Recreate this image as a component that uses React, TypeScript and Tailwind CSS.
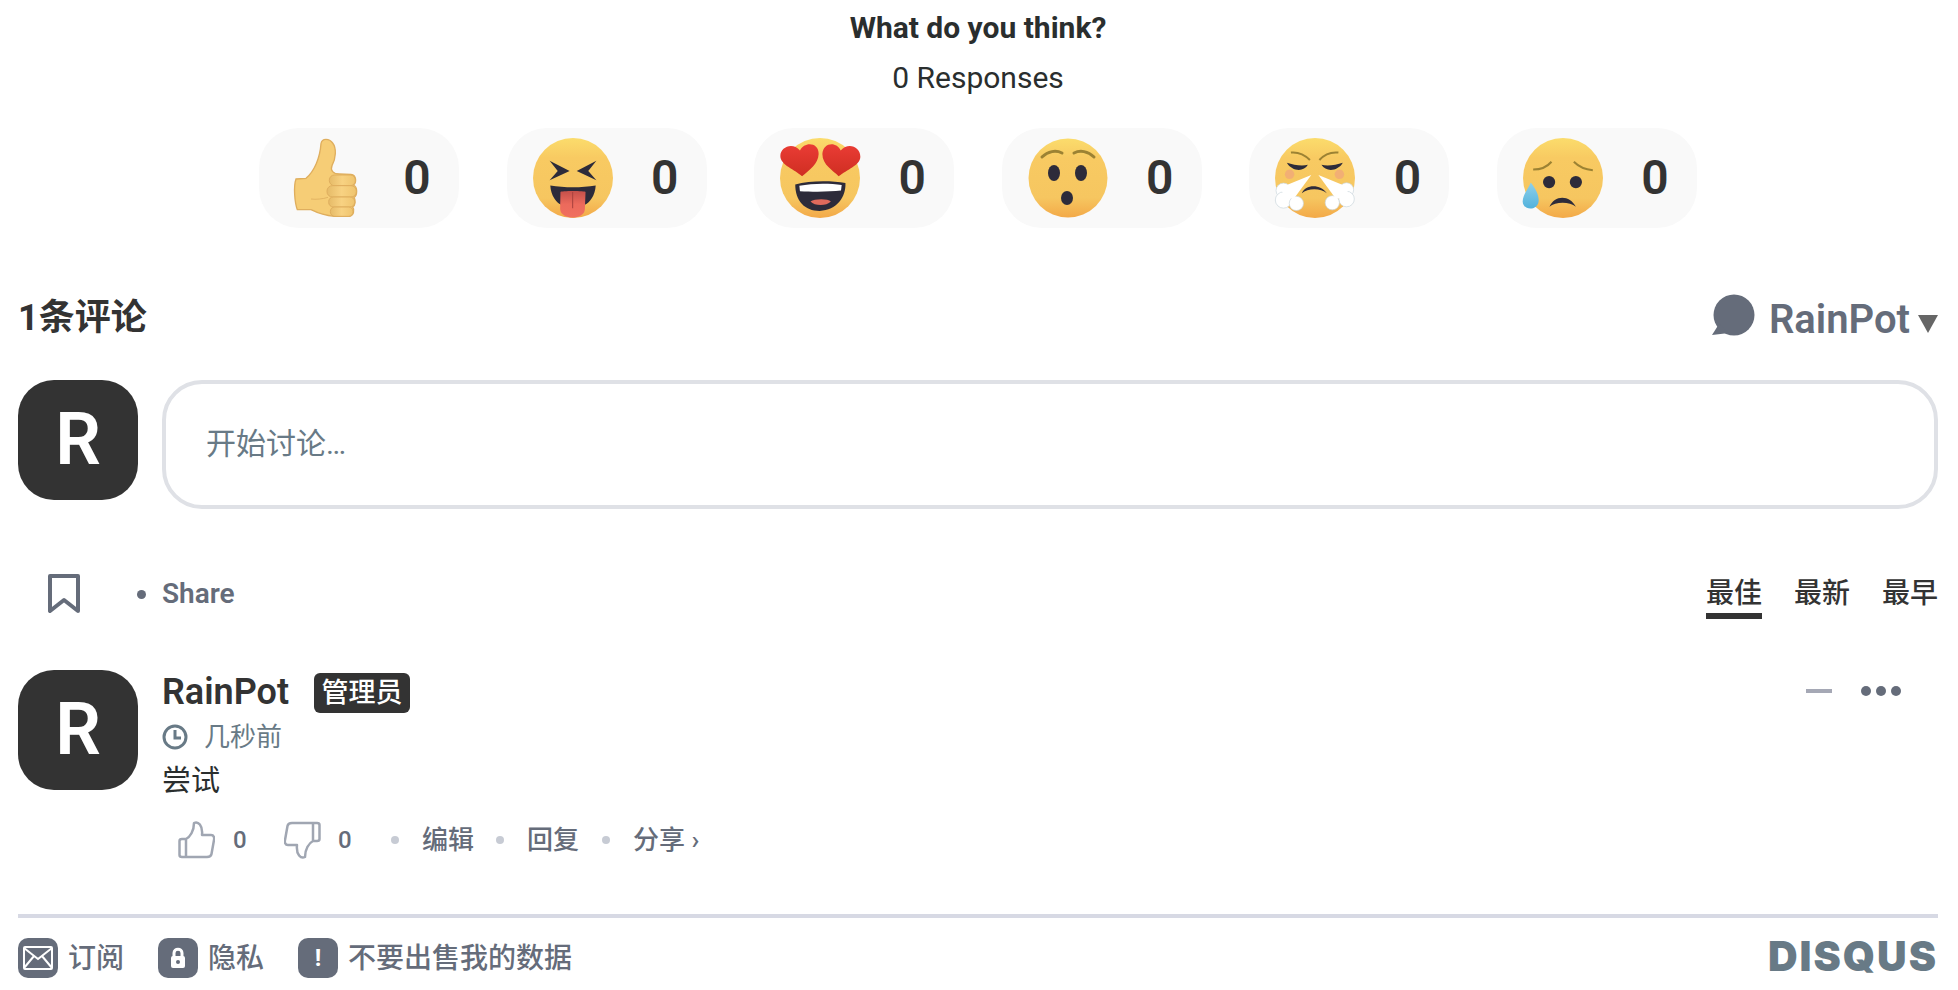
import React from "react";

const cjk = "font-['Roboto','Noto_Sans_CJK_SC',sans-serif]";

function Defs({ id }: { id: string }) {
  return (
    <defs>
      <linearGradient id={id} x1="0" y1="0" x2="0" y2="1">
        <stop offset="0" stopColor="#fbdc6c" />
        <stop offset="0.25" stopColor="#f8ca62" />
        <stop offset="0.75" stopColor="#f6c660" />
        <stop offset="1" stopColor="#f3a948" />
      </linearGradient>
      <linearGradient id={id + "t"} x1="0" y1="0" x2="0" y2="1">
        <stop offset="0" stopColor="#c4504a" />
        <stop offset="0.5" stopColor="#ec6a5c" />
        <stop offset="1" stopColor="#f0705f" />
      </linearGradient>
      <linearGradient id={id + "h"} x1="0" y1="0" x2="0" y2="1">
        <stop offset="0" stopColor="#ea3c35" />
        <stop offset="1" stopColor="#cf2e22" />
      </linearGradient>
      <linearGradient id={id + "d"} x1="0" y1="0" x2="0" y2="1">
        <stop offset="0" stopColor="#8fd0ea" />
        <stop offset="1" stopColor="#52b2dc" />
      </linearGradient>
      <linearGradient id={id + "f"} x1="0" y1="0" x2="1" y2="0">
        <stop offset="0" stopColor="#e6bb68" />
        <stop offset="0.5" stopColor="#f8d282" />
        <stop offset="1" stopColor="#efc46e" />
      </linearGradient>
    </defs>
  );
}

function Thumb() {
  return (
    <svg width="80" height="80" viewBox="17 25 240 240" className="shrink-0">
      <Defs id="a" />
      <path
        d="M125 42C128 24 150 26 160 40C172 56 170 85 158 108C152 122 162 133 180 133L215 134C232 136 232 160 222 166C236 172 234 198 224 203C230 210 228 228 220 232C226 240 224 258 210 260L165 260C140 258 115 250 95 240L54 240C46 220 42 170 50 148L80 146C105 125 122 85 125 42Z"
        fill="#f6cd76"
        stroke="#dfae5e"
        strokeWidth="4"
      />
      <path d="M95 208C110 210 130 208 146 203" fill="none" stroke="#dfae5e" strokeWidth="2.5" />
      <rect x="150" y="136" width="78" height="32" rx="15" fill="url(#af)" stroke="#dfae5e" strokeWidth="3" />
      <rect x="143" y="168" width="88" height="34" rx="16" fill="url(#af)" stroke="#dfae5e" strokeWidth="3" />
      <rect x="148" y="202" width="78" height="30" rx="14" fill="url(#af)" stroke="#dfae5e" strokeWidth="3" />
      <rect x="153" y="232" width="68" height="28" rx="13" fill="url(#af)" stroke="#dfae5e" strokeWidth="3" />
    </svg>
  );
}

function Tongue() {
  return (
    <svg width="80" height="80" viewBox="17 25 236 236" className="shrink-0">
      <Defs id="b" />
      <circle cx="135" cy="143" r="118" fill="url(#b)" />
      <path d="M66 92L125 122L66 150L90 122Z" fill="#2d2b3a" />
      <path d="M204 92L146 122L204 150L180 122Z" fill="#2d2b3a" />
      <path d="M68 165C110 172 160 172 202 165C200 195 185 215 170 222L100 222C85 215 70 195 68 165Z" fill="#2d2b3a" />
      <path d="M98 184C98 180 172 180 172 184L170 235C168 268 100 268 97 235Z" fill="url(#bt)" />
      <path d="M134 184V232" stroke="#a8423e" strokeWidth="3" />
    </svg>
  );
}

function Hearts() {
  return (
    <svg width="80" height="80" viewBox="13 25 236 236" className="shrink-0 overflow-visible">
      <Defs id="c" />
      <circle cx="131" cy="143" r="118" fill="url(#c)" />
      <path d="M58 162C100 150 165 150 206 158C208 200 180 238 130 240C85 240 58 210 58 162Z" fill="#2d2b3a" />
      <path d="M70 166C110 158 160 158 195 164L193 180C160 184 110 184 72 182Z" fill="#ffffff" />
      <path d="M103 212C115 204 155 204 163 212C150 226 115 226 103 212Z" fill="#e06a5c" />
      <path d="M78 138C58 118 14 105 14 78C14 52 50 36 72 62C85 34 128 38 127 72C126 102 100 118 78 138Z" fill="url(#ch)" />
      <path d="M186 138C170 120 138 105 138 72C140 38 180 34 192 62C215 36 250 52 250 80C250 105 210 118 186 138Z" fill="url(#ch)" />
    </svg>
  );
}

function Surprise() {
  return (
    <svg width="80" height="80" viewBox="0 0 80 80" className="shrink-0">
      <Defs id="d" />
      <circle cx="40" cy="40" r="39.5" fill="url(#d)" />
      <path d="M14 19C20 13 28 12 34 15" fill="none" stroke="#9c8233" strokeWidth="3" strokeLinecap="round" />
      <path d="M46 15C52 12 60 13 66 19" fill="none" stroke="#9c8233" strokeWidth="3" strokeLinecap="round" />
      <ellipse cx="26" cy="35" rx="6" ry="8" fill="#2d2b3a" />
      <ellipse cx="53" cy="35" rx="6" ry="8" fill="#2d2b3a" />
      <ellipse cx="39" cy="60" rx="6" ry="7" fill="#2d2b3a" />
    </svg>
  );
}

function Steam() {
  const cloud = (cx: number, cy: number, r: number) => (
    <circle cx={cx} cy={cy} r={r} fill="#ffffff" stroke="#c9d6dc" strokeWidth="2" />
  );
  return (
    <svg width="80" height="80" viewBox="15 25 236 236" className="shrink-0 overflow-visible">
      <Defs id="e" />
      <circle cx="133" cy="143" r="118" fill="url(#e)" />
      <path d="M62 68C82 66 102 74 118 90" fill="none" stroke="#9c8233" strokeWidth="6" />
      <path d="M146 90C160 74 182 66 202 68" fill="none" stroke="#9c8233" strokeWidth="6" />
      <path d="M50 98C70 105 95 108 112 104C100 126 65 124 50 98Z" fill="#2d2b3a" />
      <path d="M152 104C170 108 195 105 215 98C200 124 165 126 152 104Z" fill="#2d2b3a" />
      <circle cx="58" cy="132" r="14" fill="#ee9f80" opacity="0.6" />
      <circle cx="205" cy="132" r="14" fill="#ee9f80" opacity="0.6" />
      <path d="M94 188C105 160 150 160 168 188C150 172 112 172 94 188Z" fill="#2d2b3a" />
      {cloud(40, 180, 22)}
      {cloud(40, 208, 24)}
      {cloud(78, 218, 21)}
      {cloud(226, 178, 21)}
      {cloud(226, 205, 23)}
      {cloud(184, 216, 21)}
      <path d="M122 134L30 172L45 200L70 205Z" fill="#ffffff" />
      <path d="M143 134L235 172L220 200L195 205Z" fill="#ffffff" />
    </svg>
  );
}

function Sad() {
  return (
    <svg width="80" height="80" viewBox="12 25 236 236" className="shrink-0 overflow-visible">
      <Defs id="g" />
      <circle cx="130" cy="143" r="118" fill="url(#g)" />
      <path d="M42 118C65 118 85 108 96 95" fill="none" stroke="#9c8233" strokeWidth="6" />
      <path d="M162 95C175 108 195 118 218 120" fill="none" stroke="#9c8233" strokeWidth="6" />
      <circle cx="89" cy="155" r="18" fill="#2d2b3a" />
      <circle cx="168" cy="155" r="18" fill="#2d2b3a" />
      <path d="M90 228C105 192 150 192 168 228C150 212 108 212 90 228Z" fill="#2d2b3a" />
      <path d="M35 156C50 175 60 195 58 212C55 240 12 240 11 212C12 190 28 175 35 156Z" fill="url(#gd)" />
    </svg>
  );
}

function Pill({ children }: { children: React.ReactNode }) {
  return (
    <div className="w-[200px] h-[100px] rounded-[40px] bg-[#f9f9f9] flex items-center pl-[26px]">
      {children}
      <span className="ml-[38px] w-[28px] text-center text-[48px] leading-none font-semibold text-[#333333]">0</span>
    </div>
  );
}

function Avatar() {
  return (
    <div className="w-[120px] h-[120px] shrink-0 rounded-[36px] bg-[#333333] flex items-center justify-center text-white text-[72px] leading-none font-semibold">
      R
    </div>
  );
}

function LikeIcon({ down }: { down?: boolean }) {
  return (
    <svg width="37" height="38" viewBox="0 0 37 38" className={down ? "rotate-180" : ""} fill="none" stroke="#a0a6b2" strokeWidth="2.5" strokeLinejoin="round">
      <path d="M8 18C12 16 16 10 16 2C20 0 25 4 24 14H33C36 14 36.500 17 36 19L33.500 33C33 35.500 31 36 29 36H4C2.500 36 1.500 35 1.500 34V20C1.500 18.500 2.500 18 4 18H8V36" />
    </svg>
  );
}

function Dot({ light }: { light?: boolean }) {
  return <span className={`block rounded-full ${light ? "w-[8px] h-[8px] bg-[#c7cbd4]" : "w-[9px] h-[9px] bg-[#656c7a]"}`} />;
}

function FootIcon({ children }: { children: React.ReactNode }) {
  return <span className="w-[40px] h-[40px] rounded-[10px] bg-[#656c7a] flex items-center justify-center shrink-0">{children}</span>;
}

export default function App() {
  return (
    <div className={`w-[1958px] h-[990px] overflow-hidden bg-white pl-[18px] pr-[20px] ${cjk}`}>
      <div className="h-[56px] pb-[2px] flex items-center justify-center text-[30px] font-bold text-[#2a2e2e]">What do you think?</div>
      <div className="h-[44px] pb-[2px] flex items-center justify-center text-[30px] text-[#2a2e2e]">0 Responses</div>

      <div className="mt-[28px] flex justify-center gap-[47.6px]">
        <Pill><Thumb /></Pill>
        <Pill><Tongue /></Pill>
        <Pill><Hearts /></Pill>
        <Pill><Surprise /></Pill>
        <Pill><Steam /></Pill>
        <Pill><Sad /></Pill>
      </div>

      <div className="mt-[60px] h-[58px] flex items-center justify-between">
        <div className="text-[36px] font-bold text-[#333333] mt-[2px]">1条评论</div>
        <div className="flex items-center text-[#656c7a]">
          <svg width="44" height="44" viewBox="0 0 44 44" className="-mt-[2px]">
            <circle cx="23" cy="21" r="20.500" fill="#656c7a" />
            <path d="M8 30L1 41L18 39Z" fill="#656c7a" />
          </svg>
          <span className="ml-[14px] mt-[5px] text-[40px] leading-none font-semibold">RainPot</span>
          <svg width="20" height="18" viewBox="0 0 20 18" className="ml-[8px] mt-[13px]">
            <path d="M0 0H20L10 18Z" fill="#666666" />
          </svg>
        </div>
      </div>

      <div className="mt-[34px] flex gap-[24px]">
        <Avatar />
        <div className="flex-1 h-[129px] rounded-[40px] border-4 border-[#dfe1e6] flex items-center pl-[40px] pb-[2px] text-[30px] text-[#687a86]">
          开始讨论…
        </div>
      </div>

      <div className="mt-[60px] h-[50px] flex items-start justify-between">
        <div className="flex items-center h-[50px]">
          <svg width="36" height="42" viewBox="0 0 36 42" className="ml-[28px]">
            <path d="M4 3H32V38L18 27L4 38Z" fill="none" stroke="#656c7a" strokeWidth="4" strokeLinejoin="round" />
          </svg>
          <span className="ml-[55px]"><Dot /></span>
          <span className="ml-[16px] text-[28px] font-semibold text-[#656c7a]">Share</span>
        </div>
        <div className="flex gap-[32px] text-[28px] font-medium text-[#333333]">
          <span className="h-[50px] leading-[50px] border-b-[6px] border-[#333333] w-[56px]">最佳</span>
          <span className="h-[50px] leading-[50px]">最新</span>
          <span className="h-[50px] leading-[50px]">最早</span>
        </div>
      </div>

      <div className="mt-[51px] h-[244px] flex gap-[24px]">
        <Avatar />
        <div className="flex-1">
          <div className="h-[44px] flex items-center justify-between">
            <div className="flex items-center">
              <span className="text-[36px] font-semibold text-[#333333]">RainPot</span>
              <span className="ml-[25px] mt-[2px] h-[40px] w-[96px] rounded-[6px] bg-[#333333] text-white text-[27px] font-medium flex items-center justify-center">管理员</span>
            </div>
            <div className="flex items-center mb-[2px]">
              <span className="block w-[26px] h-[4px] bg-[#a5a8b5]" />
              <span className="ml-[29px] mr-[37px] flex gap-[5px]">
                <span className="block w-[10px] h-[10px] rounded-full bg-[#656c7a]" />
                <span className="block w-[10px] h-[10px] rounded-full bg-[#656c7a]" />
                <span className="block w-[10px] h-[10px] rounded-full bg-[#656c7a]" />
              </span>
            </div>
          </div>
          <div className="mt-[3px] h-[40px] flex items-center text-[26px] text-[#687a86]">
            <svg width="26" height="26" viewBox="0 0 26 26" fill="none" stroke="#687a86" strokeWidth="3">
              <circle cx="13" cy="13" r="11" />
              <path d="M13 6V14H19" />
            </svg>
            <span className="ml-[16px]">几秒前</span>
          </div>
          <div className="mt-[5px] h-[40px] flex items-center text-[29px] text-[#2a2e2e]">尝试</div>
          <div className="mt-[18px] h-[40px] flex items-center text-[#656c7a]">
            <span className="ml-[16px]"><LikeIcon /></span>
            <span className="ml-[18px] text-[24px] font-medium w-[14px]">0</span>
            <span className="ml-[37px]"><LikeIcon down /></span>
            <span className="ml-[17px] text-[24px] font-medium w-[14px]">0</span>
            <span className="ml-[39px]"><Dot light /></span>
            <span className="ml-[23px] text-[26px] font-medium">编辑</span>
            <span className="ml-[22px]"><Dot light /></span>
            <span className="ml-[23px] text-[26px] font-medium">回复</span>
            <span className="ml-[23px]"><Dot light /></span>
            <span className="ml-[23px] text-[26px] font-medium">分享 ›</span>
          </div>
        </div>
      </div>

      <div className="h-[4px] bg-[#d7d9e4]" />

      <div className="mt-[20px] h-[40px] flex items-center justify-between text-[28px] font-medium text-[#656c7a]">
        <div className="flex items-center">
          <FootIcon>
            <svg width="30" height="24" viewBox="0 0 30 24" fill="none" stroke="#ffffff" strokeWidth="2">
              <rect x="1" y="1" width="28" height="22" rx="1" />
              <path d="M1 2L15 13L29 2M1 22L11 10M29 22L19 10" />
            </svg>
          </FootIcon>
          <span className="ml-[10px] mt-[1px]">订阅</span>
          <span className="ml-[34px]" />
          <FootIcon>
            <svg width="18" height="22" viewBox="0 0 18 22">
              <path d="M5 10V6C5 1 13 1 13 6V10" fill="none" stroke="#ffffff" strokeWidth="3" />
              <rect x="2" y="9" width="14" height="12" rx="2" fill="#ffffff" />
              <circle cx="9" cy="15" r="2" fill="#656c7a" />
            </svg>
          </FootIcon>
          <span className="ml-[10px] mt-[1px]">隐私</span>
          <span className="ml-[34px]" />
          <FootIcon><span className="text-white text-[24px] font-bold leading-none">!</span></FootIcon>
          <span className="ml-[10px] mt-[1px]">不要出售我的数据</span>
        </div>
        <span className="font-['Inter',sans-serif] text-[41px] leading-none font-black tracking-[2px] text-[#687a86] mb-[3px]">DISQUS</span>
      </div>
    </div>
  );
}
